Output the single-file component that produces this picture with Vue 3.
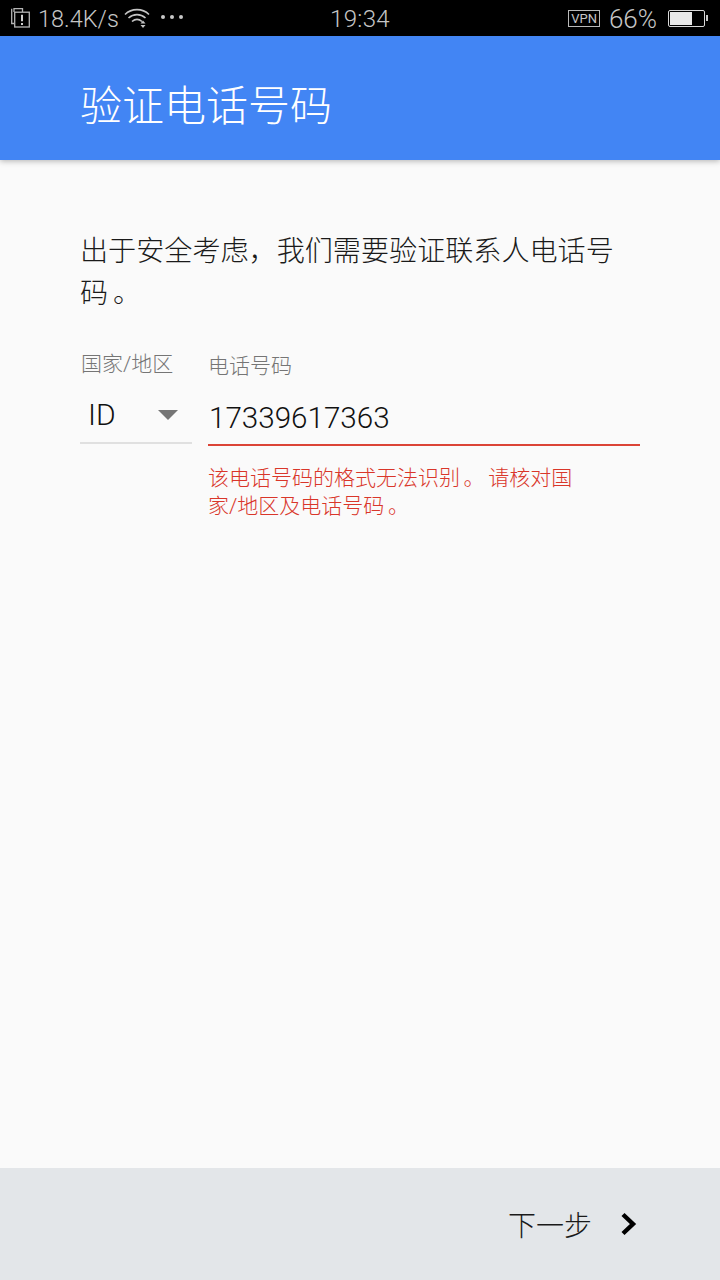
<template>
  <div class="screen">
    <div class="status-bar">
      <div class="status-left">
        <svg class="sim" width="19" height="20" viewBox="0 0 19 20" fill="none" stroke="#b5b5b5" stroke-width="1.3">
          <path d="M3 4V.7h8.5V4" />
          <path d="M3 15.5H.7V.7" />
          <rect x="3.7" y="4.2" width="14.6" height="14.8" />
          <path d="M11 6.8v6.5M11 15v2" stroke="#d0d0d0" stroke-width="2" />
        </svg>
        <span class="speed">18.4K/s</span>
        <svg class="wifi" width="26" height="22" viewBox="0 0 26 22" fill="none" stroke="#c4c4c4" stroke-width="1.6">
          <path d="M1 7.5C7.5 1 18.5 1 25 7.5" />
          <path d="M4.5 11c5-4.5 12-4.5 17 0" />
          <path d="M8 14.5c3-2.5 7-2.5 10 0" />
          <path d="M19 13.5l-2.5 3h5z M19 21l-2.5-3h5z" fill="#c4c4c4" stroke="none" />
        </svg>
        <span class="dots"><i></i><i></i><i></i></span>
      </div>
      <span class="clock">19:34</span>
      <div class="status-right">
        <span class="vpn">VPN</span>
        <span class="percent">66%</span>
        <span class="battery"><span class="level"></span></span>
        <span class="nub"></span>
      </div>
    </div>

    <header class="app-bar">
      <h1>验证电话号码</h1>
    </header>

    <main class="content">
      <p class="intro">出于安全考虑，我们需要验证联系人电话号码 。</p>
      <div class="form">
        <div class="country">
          <label>国家/地区</label>
          <div class="select">
            <span>ID</span>
            <span class="arrow"></span>
          </div>
        </div>
        <div class="phone">
          <label>电话号码</label>
          <div class="input">17339617363</div>
          <p class="error">该电话号码的格式无法识别 。 请核对国家/地区及电话号码 。</p>
        </div>
      </div>
    </main>

    <footer class="bottom-bar">
      <span>下一步</span>
      <svg width="18" height="24" viewBox="0 0 18 24" fill="none" stroke="#000" stroke-width="4.4">
        <path d="M3 2.5 L13 12 L3 21.5" />
      </svg>
    </footer>
  </div>
</template>

<script setup>
</script>

<style>
body {
  margin: 0;
}
</style>

<style scoped>
.screen {
  width: 720px;
  height: 1280px;
  display: flex;
  flex-direction: column;
  background: #fafafa;
  font-family: "Roboto", "Noto Sans CJK SC", sans-serif;
  font-weight: 300;
  overflow: hidden;
}

.status-bar {
  height: 36px;
  background: #000;
  color: #c6c6c6;
  display: grid;
  grid-template-columns: 1fr auto 1fr;
  align-items: center;
  flex-shrink: 0;
  font-size: 24px;
}
.status-left {
  display: flex;
  align-items: center;
  padding-left: 11px;
}
.speed {
  margin-left: 8px;
  font-size: 23.5px;
  position: relative;
  top: 1px;
}
.wifi {
  margin-left: 5px;
}
.dots {
  display: flex;
  gap: 5px;
  margin-left: 11px;
  margin-top: -2px;
}
.dots i {
  width: 4px;
  height: 4px;
  border-radius: 50%;
  background: #c8c8c8;
}
.clock {
  letter-spacing: 0.3px;
  position: relative;
  top: 1px;
}
.status-right {
  display: flex;
  align-items: center;
  justify-content: flex-end;
  padding-right: 12px;
}
.vpn {
  border: 1px solid #b9b9b9;
  font-size: 13px;
  font-weight: 400;
  line-height: 15px;
  padding: 0 2px;
  margin-right: 9px;
}
.percent {
  font-size: 26px;
  margin-right: 11px;
  position: relative;
  top: 1px;
}
.battery {
  width: 33px;
  height: 13px;
  border: 1px solid #d8d8d8;
  border-radius: 2px;
  padding: 1px;
  display: block;
}
.level {
  display: block;
  width: 22px;
  height: 13px;
  background: #e8e8e8;
}
.nub {
  width: 2px;
  height: 6px;
  margin-left: 1px;
  background: #c8c8c8;
}

.app-bar {
  height: 124px;
  background: #4285f4;
  flex-shrink: 0;
  display: flex;
  align-items: center;
  padding-left: 80px;
  padding-top: 8px;
  box-sizing: border-box;
  box-shadow: 0 1px 6px rgba(0, 0, 0, 0.3);
  position: relative;
}
.app-bar h1 {
  margin: 0;
  color: #fff;
  font-size: 42px;
  font-weight: 300;
}

.content {
  flex: 1;
  padding: 71px 80px 0 80px;
}
.intro {
  margin: 0;
  width: 540px;
  font-size: 28.1px;
  line-height: 42px;
  word-spacing: -2px;
  color: #1a1a1a;
}
.form {
  display: flex;
  gap: 16px;
  margin-top: 35px;
}
.country {
  width: 112px;
}
label {
  display: block;
  font-size: 21px;
  line-height: 28px;
  color: #757575;
}
.country label {
  padding-left: 1px;
}
.select {
  margin-top: 13px;
  border-bottom: 2px solid #e0e0e0;
  display: flex;
  align-items: center;
  justify-content: space-between;
  padding: 0 14px 4px 8px;
  height: 47px;
  font-size: 30px;
  color: #111;
}
.arrow {
  width: 0;
  height: 0;
  border-left: 10px solid transparent;
  border-right: 10px solid transparent;
  border-top: 10px solid #757575;
}
.phone {
  width: 432px;
  padding-top: 2px;
}
.input {
  height: 52px;
  line-height: 52px;
  margin-top: 12px;
  border-bottom: 2px solid #db4437;
  font-size: 29.6px;
  color: #111;
  padding-left: 1px;
}
.error {
  margin: 18px 0 0;
  width: 372px;
  font-size: 21px;
  line-height: 28px;
  word-spacing: -1.5px;
  color: #d9362a;
}

.bottom-bar {
  height: 112px;
  flex-shrink: 0;
  background: #e3e6e9;
  display: flex;
  align-items: center;
  justify-content: flex-end;
  gap: 28px;
  padding-right: 82px;
  font-size: 28px;
  color: #1a1a1a;
}
</style>
